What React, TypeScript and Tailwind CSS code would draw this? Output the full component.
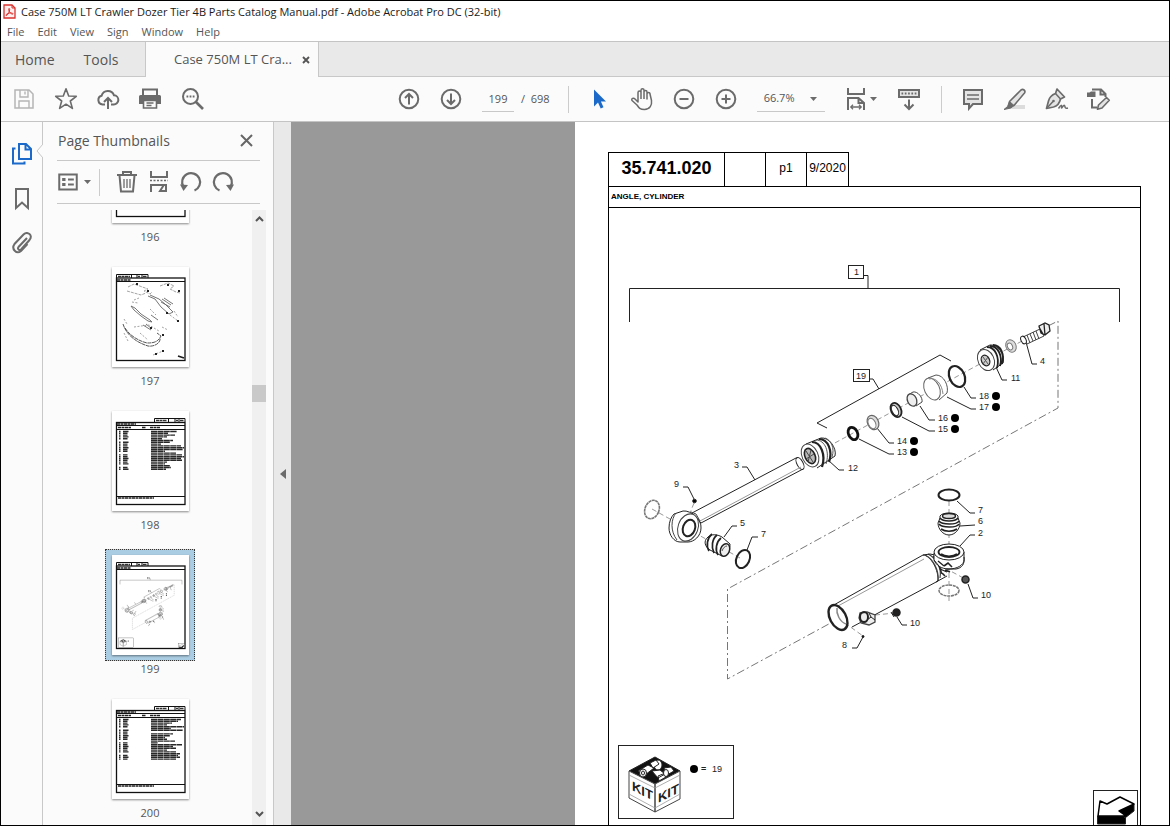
import React, { useState } from "react";

const UI = "font-['Open_Sans','Noto_Sans',sans-serif]";

function Icon({ children, size = 24, className = "text-[#6b6b6b]" }: { children: React.ReactNode; size?: number; className?: string }) {
  return (
    <svg width={size} height={size} viewBox="0 0 24 24" fill="none" stroke="currentColor" strokeWidth="2" className={`block shrink-0 ${className}`} aria-hidden="true">
      {children}
    </svg>
  );
}

function ToolButton({ label, children }: { label: string; children: React.ReactNode }) {
  return (
    <button type="button" aria-label={label} className="flex h-10 w-[42px] shrink-0 items-center justify-center">
      {children}
    </button>
  );
}

function Caret() {
  return (
    <svg width="7" height="4" viewBox="0 0 7 4" className="block shrink-0" aria-hidden="true">
      <path d="M0 0h7L3.5 4z" fill="#6b6b6b" />
    </svg>
  );
}

function AcrobatLogo() {
  return (
    <svg width="13" height="15" viewBox="0 0 13 15" className="block shrink-0" aria-hidden="true">
      <path d="M1 1h8l3 3v10H1z" fill="#fdeeee" stroke="#d9322e" strokeWidth="1.3" />
      <path d="M9 1v3h3" fill="none" stroke="#d9322e" />
      <path d="M6 4.500c1.200 0 .6 2.200-.2 4C5 10.400 3.600 12 3 11.500c-.6-.8 1.500-2 3.200-2.400 1.800-.4 4 0 3.800.8-.4 1-2.600-.6-3.500-2C5.700 6.600 5.300 4.500 6 4.500z" fill="none" stroke="#d9322e" />
    </svg>
  );
}

function TitleBar() {
  return (
    <header className="shrink-0 bg-white">
      <div className="flex h-5 items-center gap-[5px] pl-[2px]">
        <AcrobatLogo />
        <h1 className="text-[11px] leading-none whitespace-nowrap text-[#1a1a1a]">
          Case 750M LT Crawler Dozer Tier 4B Parts Catalog Manual.pdf - Adobe Acrobat Pro DC (32-bit)
        </h1>
      </div>
      <nav aria-label="Menu" className="flex h-5 items-center gap-[13px] pl-[6px] text-[11px] text-[#555]">
        {["File", "Edit", "View", "Sign", "Window", "Help"].map((m) => (
          <button key={m} type="button" className="leading-none">{m}</button>
        ))}
      </nav>
    </header>
  );
}

function TabBar() {
  return (
    <div className="flex h-9 shrink-0 items-stretch border-t border-[#c4c4c4] bg-[#e9e9e9] text-[14px] text-[#555]">
      <div className="flex w-[145px] items-center gap-[29px] border-r border-b border-[#c8c8c8] pl-[14px]">
        <button type="button">Home</button>
        <button type="button">Tools</button>
      </div>
      <div className="flex w-[172px] items-center justify-between bg-[#fbfbfb] pr-2 pl-[28px]">
        <button type="button" className="text-[13px] whitespace-nowrap">Case 750M LT Cra...</button>
        <button type="button" aria-label="Close tab">
          <svg width="8" height="8" viewBox="0 0 8 8" aria-hidden="true"><path d="M1 1l6 6M7 1L1 7" stroke="#555" strokeWidth="1.9" /></svg>
        </button>
      </div>
      <div className="flex-1 border-b border-l border-[#c8c8c8]" />
    </div>
  );
}

function Toolbar() {
  const [page, setPage] = useState("199");
  return (
    <div role="toolbar" aria-label="Tools" className="flex h-[45px] shrink-0 items-center border-b border-[#c4c4c4] bg-[#fbfbfb] pl-[2px] text-[11px] text-[#555]">
      <ToolButton label="Save">
        <Icon className="text-[#b5b5b5]">
          <path d="M3 3h14l4 4v14H3z" strokeWidth="1.5" />
          <path d="M8 3v7h8V3M13 4.500v3M7 21v-7h10v7" strokeWidth="1.400" />
        </Icon>
      </ToolButton>
      <ToolButton label="Add to starred">
        <Icon><path d="M12 1.800l2.700 7.200 7.600.3-6 4.700 2.100 7.400-6.400-4.200-6.400 4.200 2.100-7.400-6-4.700 7.600-.3z" strokeLinejoin="round" strokeWidth="1.600" /></Icon>
      </ToolButton>
      <ToolButton label="Upload to cloud">
        <Icon>
          <path d="M9 17.500H6.500A4.500 4.500 0 0 1 5.600 8.700 6.500 6.500 0 0 1 18 8.300 4.600 4.600 0 0 1 17.500 17.500H15" />
          <path d="M12 22V11.500M8 15l4-4 4 4" />
        </Icon>
      </ToolButton>
      <ToolButton label="Print">
        <Icon>
          <path d="M5 8V2.500h14V8" />
          <path d="M2.500 8h19A1.500 1.500 0 0 1 23 9.500V17h-4v-4H5v4H1V9.500A1.500 1.500 0 0 1 2.500 8z" fill="currentColor" stroke="none" />
          <path d="M5.500 13.500h13V21h-13zM8.500 16h7M8.500 18.500h5" strokeWidth="1.600" />
        </Icon>
      </ToolButton>
      <ToolButton label="Find text">
        <Icon>
          <circle cx="10.500" cy="9.500" r="7.500" />
          <path d="M16 15l7 7" strokeWidth="2.600" />
          <path d="M6.500 9.500h8" strokeWidth="1.800" strokeDasharray="1.800 1.300" />
        </Icon>
      </ToolButton>

      <div className="ml-[175px] flex items-center">
        <ToolButton label="Previous page">
          <Icon><circle cx="12" cy="12" r="9.300" /><path d="M12 17.500V7M8 11l4-4 4 4" /></Icon>
        </ToolButton>
        <ToolButton label="Next page">
          <Icon><circle cx="12" cy="12" r="9.300" /><path d="M12 6.500V17M8 13l4 4 4-4" /></Icon>
        </ToolButton>
        <input aria-label="Page number" value={page} onChange={(e) => setPage(e.target.value)} className="ml-[10px] h-[26px] w-8 border-b border-[#c8c8c8] bg-transparent text-center outline-none" />
        <span className="ml-[7px] whitespace-pre">/  698</span>
      </div>
      <div className="mx-[10px] ml-[18px] h-[27px] w-px bg-[#ccc]" />

      <ToolButton label="Select">
        <Icon><path d="M6 2.500v17l4-4 2.700 6 2.800-1.300-2.600-5.700H18z" fill="#1b6ac9" stroke="none" /></Icon>
      </ToolButton>
      <ToolButton label="Pan">
        <Icon>
          <path d="M8 12V5.500a1.500 1.500 0 0 1 3 0V3.200a1.500 1.500 0 0 1 3 0V5a1.500 1.500 0 0 1 3 0v2a1.500 1.500 0 0 1 3 0l1.500 6.500c.6 4.500-1.500 9-7 9-4.500 0-5.500-1.500-7.500-4.500L2 13.500c-1-2 1.500-3 3-1.500l3 3V9M11 5v7M14 5v7M17 6v6.500" strokeLinejoin="round" strokeWidth="1.500" />
        </Icon>
      </ToolButton>
      <ToolButton label="Zoom out"><Icon><circle cx="12" cy="12" r="9.300" /><path d="M7.500 12h9" /></Icon></ToolButton>
      <ToolButton label="Zoom in"><Icon><circle cx="12" cy="12" r="9.300" /><path d="M7.500 12h9M12 7.500v9" /></Icon></ToolButton>

      <div className="ml-[10px] flex h-[26px] w-[68px] items-center border-b border-[#c8c8c8] pr-2">
        <select aria-label="Zoom level" defaultValue="66.7%" className="h-full min-w-0 flex-1 appearance-none bg-transparent pl-[7px] outline-none">
          <option>66.7%</option>
        </select>
        <Caret />
      </div>

      <button type="button" aria-label="Fit width" className="ml-[19px] flex h-10 items-center gap-[2px]">
        <Icon>
          <path d="M4 1v6h16V1" />
          <path d="M4 23V11h10.500l5.500 5V23M14.500 11v5H20" />
          <path d="M7 20h10M9 17.800L6.800 20 9 22.200M15 17.800l2.200 2.200-2.200 2.200" strokeWidth="1.300" />
        </Icon>
        <Caret />
      </button>
      <div className="ml-[11px] flex items-center">
        <ToolButton label="Read mode">
          <Icon>
            <path d="M2 3h20v7H2z" fill="#e4e4e4" />
            <path d="M4.500 6.500h15" strokeDasharray="1.700 1.600" />
            <path d="M12 12.500v9M7.500 17.500l4.500 4.500 4.500-4.500" />
          </Icon>
        </ToolButton>
      </div>
      <div className="mr-[10px] ml-[11px] h-[27px] w-px bg-[#ccc]" />

      <ToolButton label="Comment">
        <Icon>
          <path d="M3 3h18v14h-9l-4 4.500V17H3z" fill="#e4e4e4" />
          <path d="M6 8h12M6 12h12" strokeWidth="1.400" />
        </Icon>
      </ToolButton>
      <ToolButton label="Highlight">
        <Icon>
          <path d="M11 18h11v4H8z" fill="#dcdcdc" stroke="none" />
          <path d="M6.500 14.500L18 3c2-1.500 5 .5 3.500 3L11 18.500l-5 .5z" fill="#e4e4e4" strokeLinejoin="round" strokeWidth="1.600" />
          <path d="M6.500 14.500l4.500 4L8 21l-7 1.500 3.500-3z" fill="currentColor" strokeWidth="1" />
        </Icon>
      </ToolButton>
      <ToolButton label="Sign">
        <Icon>
          <path d="M12 2l-1.500 4.500C6.500 8 4.500 10 3.500 14L1.500 21.500l7-1.500c4-1 6-3.500 7-8l4-2z" fill="#e4e4e4" strokeLinejoin="round" strokeWidth="1.700" />
          <path d="M2 21l6-6.500M10.500 6.500l5 5.500M13.500 21.500c2.500-4 3.500-4 3-1-.2 2 2-3 3-2s-.5 3.500 3.500 2.500" strokeWidth="1.500" />
          <circle cx="8.500" cy="14" r="1.300" fill="currentColor" stroke="none" />
        </Icon>
      </ToolButton>
      <ToolButton label="Edit PDF">
        <Icon>
          <path d="M5 2.500h9l4.500 4.500v3M13.500 3v4.500h5M5 12v8.500h5" />
          <path d="M0 5.500h2.500L4 4.500h4.500V10H0z" fill="currentColor" stroke="none" />
          <path d="M11.500 18l8-7.500 2.800 2.800L15 21l-4.500 1.200z" fill="#e4e4e4" strokeLinejoin="round" strokeWidth="1.600" />
        </Icon>
      </ToolButton>
    </div>
  );
}

function SideRail() {
  return (
    <nav aria-label="Panels" className="flex w-[42px] shrink-0 flex-col items-center gap-[21px] border-r border-[#c8c8c8] bg-[#fbfbfb] pt-5">
      <button type="button" aria-label="Page thumbnails" className="relative flex w-full justify-center">
        <Icon className="text-[#1b6ac9]">
          <path d="M9 2h7l5 5v10H9zM15.500 2.500v5H21" />
          <path d="M5.500 6.500H3V21.500h11.500V19.500" />
        </Icon>
        <svg width="7" height="14" viewBox="0 0 7 14" className="absolute top-[2px] -right-px" aria-hidden="true">
          <path d="M7 0L1 7l6 7" fill="#fbfbfb" stroke="#c8c8c8" />
        </svg>
      </button>
      <button type="button" aria-label="Bookmarks"><Icon><path d="M6 2h12v19l-6-5.500L6 21z" /></Icon></button>
      <button type="button" aria-label="Attachments">
        <Icon><path d="M17 6l-8.500 9c-1.500 2 1 4 2.500 2.500l8.500-9.500c4-5-2-9-6-5.500L4.500 12C1 17 6.500 22.500 11 19l6.500-7" /></Icon>
      </button>
    </nav>
  );
}

const LABELS: [string, number, number][] = [
  ["4", 1040, 364], ["11", 1011, 381], ["18", 979, 399], ["17", 979, 410], ["16", 938, 421], ["15", 938, 432],
  ["14", 897, 444], ["13", 897, 455], ["12", 848, 471], ["3", 734, 468], ["9", 674, 487], ["5", 740, 526],
  ["7", 761, 537], ["7", 978, 513], ["6", 978, 524], ["2", 978, 536], ["10", 981, 598], ["10", 910, 626], ["8", 842, 648],
  ["1", 854, 275], ["19", 856, 379], ["19", 712, 772],
];

const DOTS: [number, number][] = [[996, 396], [996, 407], [955, 418], [955, 429], [914, 441], [914, 452], [694, 769]];

function CylinderDrawing({ labelled = true }: { labelled?: boolean }) {
  return (
    <g stroke="#222" fill="none" strokeWidth={labelled ? 1 : 2}>
      <path d="M629.500 322V288.500H1119.500V322M864 275.500h4V288" />
      <rect x="848.500" y="265.500" width="15" height="13" />
      <rect x="853.500" y="369.500" width="16" height="12" />
      <path d="M827 428l-10-5L940 355l11 6M869 379h4l6 10" />
      <path
        strokeDasharray="8 3 2 3"
        stroke="#777"
        d="M1048 326l10-5V408L727.500 589V679L838 619"
      />
      <path stroke="#999" strokeDasharray="5 3" d="M1022 341L822 450M652 509l88 49M949 501v100M838 618l25 18M875 615l20-2M945 568l22 12M694 503l-4 10" />
      <path
        d="M1026 342l6 22h5M996 367l6 13h5M964 387l7 11h5M947 397l24 12h5M920 406l9 14h6M902 417l27 14h6M877 428l12 15h5M859 439l30 15h5M828 460l11 10h5M742 467h5l8 13M683 487h5l6 12M737 526h-5l-8 11M758 537h-6l-5 13M957 501l13 12h5M960 526l15-1M960 546l10-11h5M968 584l5 14h5M897 617l5 8h5M863 637l-6 11h-5"
      />

      {/* bolt, washer */}
      <path d="M1023 337l17-8 4 7-17 8zM1027 335l3 8M1030 334l3 7M1033 332l3 8M1036 331l3 8" fill="#fff" stroke="#444" />
      <path d="M1039 326l6-3 4 2 1 6-5 4-4-2zM1044 324l1 11M1039 327l4 7" fill="#eee" strokeWidth="1.300" />
      <ellipse cx="1023.500" cy="340" rx="2.500" ry="4" transform="rotate(-25 1023.500 340)" fill="#fff" />
      <g stroke="#777">
        <ellipse cx="1011" cy="346" rx="5" ry="6.500" transform="rotate(-25 1011 346)" fill="#ddd" />
        <ellipse cx="1010" cy="346.500" rx="2.500" ry="3.500" transform="rotate(-25 1010 346.500)" fill="#fff" />
      </g>

      {/* piston 11 */}
      <path d="M980 350l10-5c8-1 15 10 13 18l-10 7" fill="#fff" />
      <path d="M990 346c8 0 13 10 10 20M993 345c8 0 12 10 9 19M987 347c8 0 13 10 10 21" strokeWidth="1.800" />
      <ellipse cx="986" cy="360" rx="8" ry="11" transform="rotate(-25 986 360)" fill="#fff" stroke="#444" />
      <ellipse cx="985.500" cy="360.500" rx="4" ry="5.500" transform="rotate(-25 985.500 360.500)" strokeWidth="1.300" fill="#ccc" />
      <path d="M983 357l5 7M988 357l-5 7" stroke="#555" />

      {/* seals 13-18 */}
      <ellipse cx="957" cy="376.500" rx="7.500" ry="11" transform="rotate(-25 957 376.500)" strokeWidth="2.200" />
      <path d="M928 378l8-3c8 0 13 11 11 18l-8 7" fill="#fff" stroke="#555" />
      <ellipse cx="932" cy="389" rx="7.500" ry="11.500" transform="rotate(-25 932 389)" stroke="#666" fill="#fff" />
      <path d="M929 379c7-2 13 5 14 15" stroke="#888" />
      <path d="M908 395l5-3c5-1 10 6 9 10l-6 4" fill="#fff" stroke="#444" />
      <ellipse cx="912" cy="400" rx="4.500" ry="6.500" transform="rotate(-25 912 400)" fill="#eee" stroke="#444" strokeWidth="1.300" />
      <ellipse cx="896" cy="410" rx="5" ry="7.500" transform="rotate(-25 896 410)" strokeWidth="1.800" fill="#ccc" />
      <ellipse cx="895" cy="410.500" rx="3" ry="5.500" transform="rotate(-25 895 410.500)" fill="#fff" />
      <ellipse cx="873" cy="422.500" rx="5.500" ry="7.500" transform="rotate(-25 873 422.500)" stroke="#666" strokeWidth="1.200" fill="#ddd" />
      <ellipse cx="872" cy="423.500" rx="3.500" ry="5.500" transform="rotate(-25 872 423.500)" stroke="#777" fill="#fff" />
      <ellipse cx="853" cy="433.500" rx="4.500" ry="6.500" transform="rotate(-25 853 433.500)" strokeWidth="2.800" stroke="#111" />

      {/* gland 12 */}
      <path d="M806 444l15-6c8-1 16 10 14 18l-18 12" fill="#fff" />
      <path d="M812 442c9 0 14 13 10 25M819 439c9 0 14 12 10 23" strokeWidth="2.200" />
      <path d="M816 440c9 0 14 12 10 24M825 438c6 2 10 10 7 19" stroke="#555" />
      <ellipse cx="810" cy="455.500" rx="8" ry="12" transform="rotate(-25 810 455.500)" fill="#fff" stroke="#444" />
      <ellipse cx="810" cy="456" rx="5" ry="8" transform="rotate(-25 810 456)" fill="#bbb" strokeWidth="1.600" />
      <path d="M806 451l7 11M811 450l-3 12M814 454l-8 5" stroke="#444" />

      {/* rod 3 and its eye */}
      <path d="M692 513L796 458c4-1 8 7 7 11L701 523z" fill="#fff" />
      <ellipse cx="800" cy="463.500" rx="3" ry="6.500" transform="rotate(-28 800 463.500)" fill="#fff" />
      <path d="M700 521L801 467" stroke="#999" />
      <path d="M674 514l9-3c8-1 19 9 18 17 0 8-7 14-13 14h-8c-6 0-11-7-11-14 0-6 2-11 5-14z" fill="#fff" />
      <ellipse cx="688" cy="527.500" rx="10" ry="14" transform="rotate(20 688 527.500)" fill="#fff" stroke="#444" />
      <ellipse cx="689" cy="528" rx="6" ry="8.500" transform="rotate(20 689 528)" strokeWidth="2" fill="#fff" />
      <path d="M676 513c-5 6-6 18 1 27M691 512l5 2 4 7" stroke="#444" />
      <ellipse cx="652" cy="509.500" rx="7" ry="9.500" transform="rotate(22 652 509.500)" stroke="#777" strokeWidth="1.600" strokeDasharray="3 .5" />
      <circle cx="694.500" cy="501" r="1.800" fill="#000" />

      {/* bearing 5, ring 7 */}
      <path d="M708 537c3-3 9-3 14 0l8 7c0 6-3 11-8 12l-12-6c-5-3-7-9-2-13z" fill="#fff" />
      <path d="M712 534c-5 4-6 12-3 17M717 535c-5 4-6 12-3 18M721 538c-5 4-6 12-3 17" strokeWidth="1.700" />
      <ellipse cx="725" cy="550" rx="4.500" ry="6.500" transform="rotate(20 725 550)" fill="#eee" strokeWidth="1.500" />
      <path d="M722 551c1-3 3-5 5-5" stroke="#555" />
      <ellipse cx="743" cy="559" rx="6.500" ry="9.500" transform="rotate(25 743 559)" strokeWidth="2" />

      {/* barrel 2 */}
      <path d="M832 606L923 555c8 0 16 16 15 26L852 627" fill="#fff" />
      <path d="M838 606l86-47" stroke="#999" />
      <path d="M925 555c8 4 14 14 13 26M928 554c8 4 14 14 12 24M933 556c5 4 9 11 8 18" strokeWidth="1.200" stroke="#444" />
      <path d="M923 555l7-1 5 1M936 582l11-6" />
      <ellipse cx="838" cy="617.500" rx="8" ry="13.500" transform="rotate(-28 838 617.500)" strokeWidth="2.400" fill="#fff" />
      <path d="M837 608c-1 6 3 14 9 16" stroke="#888" strokeWidth="1.500" />
      <path d="M934 553v7c2 5 7 9 15 9s15-4 15-9v-8" fill="#fff" />
      <path d="M946 569h10c6-1 9-5 8-12" />
      <path d="M934 560l5 6 3 8" />
      <ellipse cx="949" cy="552" rx="15" ry="8" fill="#fff" />
      <ellipse cx="949" cy="552" rx="10.500" ry="5" fill="#fff" strokeWidth="1.800" />
      <path d="M941 554c4 3 12 3 16 0M944 566l4-3 4 4M945 570l5 2M942 573l3 3" strokeWidth="1.600" />
      <path d="M938 561l6 5M940 569l7 3" strokeWidth="1.300" />

      {/* bearing 6 and rings */}
      <path d="M940 518v-2c2-4 16-4 18 0v2l2 5c0 6-5 12-11 12s-11-6-11-12z" fill="#fff" />
      <path d="M940 518c3 4 15 4 18 0M939 521c3 4 18 4 20 0M939 524c3 4 18 4 20 0M941 529c4 3 12 3 16 0" strokeWidth="1.600" />
      <ellipse cx="949" cy="516" rx="6.500" ry="2.500" fill="#ddd" strokeWidth="1.400" />
      <ellipse cx="949" cy="495" rx="10.500" ry="5.500" strokeWidth="2" />
      <ellipse cx="949" cy="590.500" rx="10" ry="5.500" stroke="#777" strokeWidth="1.500" strokeDasharray="3 .7" />

      {/* plugs 10, fitting, pin 8 */}
      <ellipse cx="965.500" cy="579.500" rx="3.500" ry="3.500" fill="#555" strokeWidth="1.500" />
      <ellipse cx="896.500" cy="612.500" rx="3.500" ry="3.500" fill="#222" strokeWidth="1.500" />
      <path d="M891 612l3 5" />
      <path d="M860 613l7-1 8 3v7l-6 3-8-2-2-5z" fill="#eee" stroke="#444" strokeWidth="1.300" />
      <ellipse cx="864" cy="617" rx="4" ry="5" strokeWidth="2" />
      <path d="M867 620l4-3 4 3M869 613l2 4" />
      <circle cx="863" cy="636.500" r="1" fill="#000" />

      {/* kit box */}
      <rect x="618.500" y="745.500" width="115" height="73" />
      <path d="M629 771l26-14 25 14-25 13z" fill="#111" />
      <g fill="#fff" strokeWidth="1">
        <path d="M638 771l10-6 6 3-9 7z" />
        <ellipse cx="658" cy="765" rx="4" ry="5" />
        <path d="M650 763l6-3 3 4-6 4zM652 771l8-1 5 4-7 4zM664 768l7-1 3 4-7 4zM658 776l5-2 3 3-7 4z" />
        <ellipse cx="643" cy="773" rx="3.500" ry="4" />
        <ellipse cx="643" cy="773" rx="1.500" ry="2" />
        <ellipse cx="666" cy="773" rx="2.500" ry="3.500" />
      </g>
      <path d="M629 771l26 13v28l-26-14zM655 784l25-13v28l-25 13z" fill="#fff" stroke="#444" />
      <path d="M629 775l26 13 25-13M629 794l26 14 25-14" stroke="#999" strokeWidth=".8" />

      {/* direction arrow */}
      <rect x="1093.500" y="790.500" width="44" height="44" fill="#fff" />
      <path d="M1097.500 816h28v8h-28zM1118 811l16-7v7l-9 7z" fill="#000" />
      <path d="M1100 801l7 3 13-7 14 7-15 7 7 5h-28z" fill="#fff" strokeWidth="1.500" stroke="#000" strokeLinejoin="round" />

      <g fill="#000" stroke="none">
        {DOTS.map(([x, y]) => <circle key={`${x}-${y}`} cx={x} cy={y} r="4" />)}
      </g>
      {labelled && (
        <g fill="#222" stroke="none" fontFamily="'Liberation Sans', Arial, sans-serif" fontSize="9">
          {LABELS.map(([t, x, y]) => <text key={`${x}-${y}`} x={x} y={y}>{t}</text>)}
          <text x="701" y="772" fontWeight="700">=</text>
          <g fontSize="13" fontWeight="700">
            <text transform="translate(632 790) skewY(27)">KIT</text>
            <text transform="translate(658 803) skewY(-27)">KIT</text>
          </g>
        </g>
      )}
    </g>
  );
}

const ROWS_198 = [26, 17, 24, 16, 11, 22, 19, 10, 30, 33, 32, 14, 25, 31, 33, 30, 31, 16, 14, 19, 20, 15];
const ROWS_200 = [30, 27, 21, 16, 33, 20, 32, 0, 22, 19, 14, 16, 24, 7, 31, 22, 25, 16, 25, 29, 27, 29, 25];

function TableThumb({ rows }: { rows: number[] }) {
  return (
    <g>
      <path d="M42.500 11V7.500H73V11M56.500 8v3M63 8v3M67 8v3" fill="none" stroke="#111" />
      <path d="M44 9.500h11M64 9.500h2M68 9.500h4" stroke="#333" strokeWidth="1.500" strokeDasharray="3 .5" />
      <rect x="4.500" y="11.500" width="68.500" height="82" fill="none" stroke="#111" strokeWidth="1.300" />
      <path d="M5 14.500h68M5 18.500h68M5 85.500h68" stroke="#111" strokeWidth="1.100" />
      <path d="M5 13h19M6 16.500h13M30 16.500h4M38 16.500h10M6 87h36" stroke="#222" strokeWidth="1.500" strokeDasharray="3 .5" />
      {rows.map((w, i) => (
        <g key={i} stroke="#111" strokeWidth="1.400" opacity=".9">
          <path d={`M39 ${20.5 + i * 1.8}h${w}`} strokeDasharray="6 .4" />
          {i % 7 !== 5 && <path d={`M11 ${20.5 + i * 1.8}h${i % 3 ? 4.5 : 5.5}M7 ${20.5 + i * 1.8}h1.5`} />}
        </g>
      ))}
    </g>
  );
}

function DrawingFrame() {
  return (
    <g>
      <path d="M4.500 11V7.500H36V11M19.500 8v3M25 8v3M30 8v3" fill="none" stroke="#111" />
      <path d="M6 9.500h12M26 9.500h2M31 9.500h4" stroke="#333" strokeWidth="1.500" strokeDasharray="3 .5" />
      <rect x="4.500" y="11" width="68.500" height="82.500" fill="none" stroke="#111" strokeWidth="1.300" />
      <path d="M5 14.500h68" stroke="#111" strokeWidth="1.100" />
      <path d="M5 13h14" stroke="#222" strokeWidth="1.500" strokeDasharray="3 .5" />
    </g>
  );
}

function LinkageThumb() {
  return (
    <g>
      <DrawingFrame />
      <g fill="none" stroke="#999" strokeWidth=".9">
        <path d="M18 21l6-3 14 5-4 2 6 3 2-2M17 25l14 4 5-2M50 20l8-3 6 3-4 3 6 3 4 1" strokeDasharray="3 1" transform="translate(-2 -1)" />
        <path d="M36 29l7 3 6 8 8 7 4-2-8-8-6-5-9-4M19 39l4 2 6 6 9 6 2 2-4-1-7-5-7-6zM50 32l9 6M52 31l9 6M49 35l9 5M39 48l7 5M31 58l8 5M34 57l6 5" stroke="#666" />
        <path d="M11 57c3 10 12 18 25 22 6 1 13-3 12-8M13 61c5 8 14 13 22 15 7 0 11-1 14-7l-4-3" stroke="#444" strokeDasharray="4 .6" />
        <path d="M12 66l4 8M22 60l15-2 10 6M20 69l4 5M28 66l8 7M58 48l8 6M41 88l10-4M50 60l6 3M22 33l5-2M20 35l6 1M12 52l3 5M38 42l6 6M62 44l4 6" strokeDasharray="2 1.500" />
      </g>
      <path d="M35 24h2M24 17h2M54 46h2M38 61h2M65 54h2M43 87h2M50 84h2M55 18h2M66 24h2M50 68h2M66 89l6 2" stroke="#222" strokeWidth="1.800" />
    </g>
  );
}

function PageThumb({ page, selected, children }: { page: number; selected?: boolean; children: React.ReactNode }) {
  return (
    <li className="flex h-36 shrink-0 flex-col items-center">
      <button type="button" aria-label={`Page ${page}`} aria-current={selected ? "page" : undefined}
        className={`flex h-28 w-[90px] items-center justify-center border ${selected ? "border-dotted border-[#333] bg-[#abcde3]" : "border-transparent"}`}>
        <svg viewBox="0 0 77 100" className="block h-[100px] w-[77px] bg-white shadow-[0_1px_2px_rgba(0,0,0,0.45)]" aria-hidden="true">
          {children}
        </svg>
      </button>
      <span className="text-[11px] leading-4 text-[#555]">{page}</span>
    </li>
  );
}

function ThumbnailPanel() {
  return (
    <aside className="flex w-[230px] shrink-0 flex-col bg-[#fbfbfb] pl-[14px]">
      <div className="mr-[13px] flex h-[39px] shrink-0 items-center justify-between border-b border-[#c8c8c8] pr-[7px] pb-[2px] pl-px">
        <h2 className="text-[14px] text-[#555]">Page Thumbnails</h2>
        <button type="button" aria-label="Close panel">
          <svg width="13" height="13" viewBox="0 0 13 13" aria-hidden="true"><path d="M1 1l11 11M12 1L1 12" stroke="#666" strokeWidth="2" /></svg>
        </button>
      </div>
      <div className="mr-[13px] flex h-[43px] shrink-0 items-center border-b border-[#c8c8c8]">
        <button type="button" aria-label="Options" className="flex items-center gap-[6px] pl-px">
          <Icon size={20}>
            <path d="M1.500 3h21v18h-21z" strokeWidth="2.400" />
            <path d="M5 9h4M5 15h4" strokeWidth="3.500" /><path d="M12 9h7M12 15h7" strokeWidth="2.200" />
          </Icon>
          <Caret />
        </button>
        <div className="mx-2 h-[27px] w-px bg-[#ccc]" />
        <div className="ml-[7px] flex items-center gap-2">
          <button type="button" aria-label="Delete pages">
            <Icon>
              <path d="M2 5h20M8 5V2h8v3M4.500 5.500L6 21.500h12l1.500-16" /><path d="M9 9v9M12 9v9M15 9v9" strokeWidth="1.300" />
            </Icon>
          </button>
          <button type="button" aria-label="Split pages">
            <Icon>
              <path d="M4 1v6h16V1" /><path d="M3 10.500h18" strokeDasharray="2 1.500" strokeWidth="1.500" />
              <path d="M4 22v-7h15v7M19 15.500V21h-6l3.500-5.500" />
            </Icon>
          </button>
          <button type="button" aria-label="Rotate left">
            <Icon><path d="M4.500 17A9 9 0 1 1 15.500 20.500" strokeWidth="2.200" /><path d="M1 14.500l8 .5-4.500 6z" fill="currentColor" stroke="none" /></Icon>
          </button>
          <button type="button" aria-label="Rotate right">
            <Icon><path d="M19.500 17A9 9 0 1 0 8.500 20.500" strokeWidth="2.200" /><path d="M23 14.500l-8 .5 4.500 6z" fill="currentColor" stroke="none" /></Icon>
          </button>
        </div>
      </div>
      <div className="mt-[6px] flex min-h-0 flex-1 justify-between pr-[7px]">
        <div className="min-w-0 flex-1 overflow-hidden pr-[9px]">
          <ul className="-mt-[93px] flex flex-col">
            <PageThumb page={196}><DrawingFrame /></PageThumb>
            <PageThumb page={197}><LinkageThumb /></PageThumb>
            <PageThumb page={198}><TableThumb rows={ROWS_198} /></PageThumb>
            <PageThumb page={199} selected>
              <DrawingFrame />
              <svg x="5" y="15" width="68" height="78" viewBox="609 208 531 617"><CylinderDrawing labelled={false} /></svg>
            </PageThumb>
            <PageThumb page={200}><TableThumb rows={ROWS_200} /></PageThumb>
          </ul>
        </div>
        <div className="flex w-[14px] flex-col items-center bg-[#f0f0f0]">
          <svg width="9" height="6" viewBox="0 0 9 6" className="mt-[6px] shrink-0" aria-hidden="true"><path d="M1 5l3.500-3.500L8 5" fill="none" stroke="#555" strokeWidth="2" /></svg>
          <div className="flex-[162]" />
          <div className="h-[17px] w-full bg-[#c9c9c9]" />
          <div className="flex-[408]" />
          <svg width="9" height="6" viewBox="0 0 9 6" className="mb-2 shrink-0" aria-hidden="true"><path d="M1 1l3.500 3.500L8 1" fill="none" stroke="#555" strokeWidth="2" /></svg>
        </div>
      </div>
    </aside>
  );
}

function DocumentPage() {
  return (
    <main className="min-w-0 flex-1 overflow-hidden bg-white pt-[30px] pr-7 pl-[33px] font-['Liberation_Sans',Arial,sans-serif] text-black">
      <div className="flex h-[34px] w-fit divide-x divide-black border-x border-t border-black text-[12px]">
        <div className="flex w-[116px] items-center justify-center pb-1 text-[18px] leading-none font-bold">35.741.020</div>
        <div className="w-[41px]" />
        <div className="flex w-[41px] items-center justify-center pb-1">p1</div>
        <div className="flex w-[41px] items-center justify-center pb-1">9/2020</div>
      </div>
      <div className="border border-black">
        <h2 className="flex h-[21px] items-center border-b border-black pl-[2px] text-[8px] font-bold">ANGLE, CYLINDER</h2>
        <svg viewBox="609 208 531 627" className="block h-auto w-full" role="img" aria-label="Angle cylinder exploded view">
          <CylinderDrawing />
        </svg>
      </div>
    </main>
  );
}

export default function App() {
  return (
    <div className={`flex h-screen flex-col overflow-hidden border border-black bg-white ${UI}`}>
      <TitleBar />
      <TabBar />
      <Toolbar />
      <div className="flex min-h-0 flex-1">
        <SideRail />
        <ThumbnailPanel />
        <button type="button" aria-label="Collapse panel" className="flex w-[18px] shrink-0 items-center justify-center border-l border-[#c8c8c8] bg-[#e9e9e9]">
          <svg width="6" height="10" viewBox="0 0 6 10" aria-hidden="true"><path d="M6 0v10L0 5z" fill="#6b6b6b" /></svg>
        </button>
        <div className="w-[284px] shrink-0 bg-[#999]" />
        <DocumentPage />
      </div>
    </div>
  );
}
